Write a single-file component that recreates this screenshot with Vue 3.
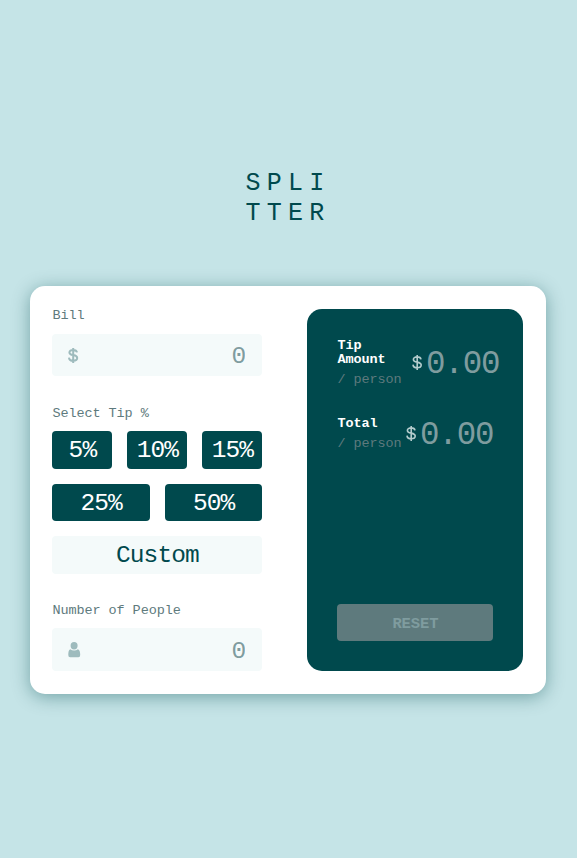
<script setup>
import { ref } from 'vue'

const bill = ref('')
const people = ref('')
const custom = ref('')
const tips = [5, 10, 15, 25, 50]
const results = [
  { name: 'Tip Amount', key: 'tip', value: '0.00' },
  { name: 'Total', key: 'total', value: '0.00' },
]
</script>

<template>
  <main class="page">
    <h1 class="logo"><span>SPLI</span><span>TTER</span></h1>
    <section class="card">
      <form class="entry" @submit.prevent>
        <label class="label" for="bill">Bill</label>
        <div class="field bill">
          <svg width="11" height="17" viewBox="0 0 11 17">
            <path
              d="M9 5.4C8.7 3.6 7.4 2.9 5.2 2.9C2.9 2.9 1.4 3.8 1.4 5.4C1.4 7.2 3 7.7 5.2 8.1C7.6 8.6 9.2 9.3 9.2 11.1C9.2 12.9 7.6 13.8 5.2 13.8C2.7 13.8 1.1 12.7 1 10.6M5.2 1V15.9"
              fill="none"
              stroke="#9ebbbd"
              stroke-width="2"
            />
          </svg>
          <input id="bill" v-model="bill" placeholder="0" />
        </div>
        <span class="label tip-label">Select Tip %</span>
        <div class="tips">
          <button v-for="tip in tips" :key="tip" type="button" :class="{ wide: tip > 15 }">{{ tip }}%</button>
          <input v-model="custom" class="custom" placeholder="Custom" />
        </div>
        <label class="label people-label" for="people">Number of People</label>
        <div class="field">
          <svg width="13" height="16" viewBox="0 0 13 16">
            <path
              d="M9.6 3.8A3.5 3.7 0 1 1 2.6 3.8A3.5 3.7 0 1 1 9.6 3.8ZM2.3 7.2C3.3 8 4.6 8.4 6.1 8.4S8.9 8 9.9 7.2C11.7 7.8 12.2 10.2 12.2 13Q12.2 15.3 10.4 15.3H2.1Q.3 15.3 .3 13C.3 10.2 .6 7.8 2.3 7.2Z"
              fill="#9ebbbd"
            />
          </svg>
          <input id="people" v-model="people" placeholder="0" />
        </div>
      </form>
      <aside class="panel">
        <div v-for="row in results" :key="row.key" class="result" :class="row.key">
          <div class="caption">
            <strong>{{ row.name }}</strong>
            <small>/ person</small>
          </div>
          <svg class="dollar" width="11" height="17" viewBox="0 0 11 17">
            <path
              d="M9 5.4C8.7 3.6 7.4 2.9 5.2 2.9C2.9 2.9 1.4 3.8 1.4 5.4C1.4 7.2 3 7.7 5.2 8.1C7.6 8.6 9.2 9.3 9.2 11.1C9.2 12.9 7.6 13.8 5.2 13.8C2.7 13.8 1.1 12.7 1 10.6M5.2 1V15.9"
              fill="none"
              stroke="#b3cccd"
              stroke-width="1.6"
            />
          </svg>
          <output>{{ row.value }}</output>
        </div>
        <button type="button" class="reset" disabled>RESET</button>
      </aside>
    </section>
  </main>
</template>

<style>
body {
  background: #c5e4e7;
}
</style>

<style scoped>
* {
  box-sizing: border-box;
}
.page,
button,
input {
  font-family: 'Liberation Mono', monospace;
}
.page {
  min-height: 858px;
  padding: 168px 31px 0 30px;
  background: #c5e4e7;
}
.logo {
  display: flex;
  flex-direction: column;
  align-items: center;
  margin: 0 0 58.4px;
  font-size: 25px;
  font-weight: 400;
  line-height: 30px;
  letter-spacing: 6.3px;
  color: #00494d;
}
.logo span {
  padding-top: 1px;
  height: 30px;
}
.card {
  display: flex;
  justify-content: space-between;
  width: 516px;
  height: 407.2px;
  padding: 22.5px 22.6px 22.5px 22.4px;
  border-radius: 15px;
  background: #fff;
  box-shadow: 0 3px 18px rgba(0, 73, 77, 0.42);
}
.entry {
  display: flex;
  flex-direction: column;
  width: 210px;
}
.label {
  height: 25px;
  font-size: 13.5px;
  line-height: 14px;
  letter-spacing: -0.08px;
  color: #5e7a7d;
}
.field {
  display: flex;
  align-items: center;
  width: 210px;
  height: 42.5px;
  padding: 0 15px;
  border-radius: 4px;
  background: #f4fafa;
}
.field svg {
  flex: none;
  margin-left: 0.5px;
}
input {
  min-width: 0;
  border: 0;
  outline: 0;
  padding: 0;
  background: transparent;
  font-size: 24.5px;
  letter-spacing: -0.9px;
}
.field input {
  flex: 1;
  height: 40px;
  padding-top: 3px;
  padding-right: 2px;
  text-align: right;
}
.field input::placeholder {
  color: #7f9c9f;
  opacity: 1;
}
.tip-label {
  margin-top: 30px;
  padding-top: 0.8px;
}
.tips {
  display: grid;
  grid-template-columns: repeat(6, 1fr);
  gap: 15px;
}
.tips button,
.custom {
  height: 37.5px;
  border-radius: 4px;
}
.tips button {
  grid-column: span 2;
  padding: 1px 0 0;
  border: 0;
  background: #00494d;
  color: #fff;
  font-size: 24.5px;
  letter-spacing: -0.9px;
}
.tips .wide {
  grid-column: span 3;
}
.custom {
  grid-column: span 6;
  width: 100%;
  padding-top: 1px;
  background: #f4fafa;
  text-align: center;
}
.custom::placeholder {
  color: #00494d;
  opacity: 1;
}
.people-label {
  margin-top: 29.5px;
  padding-top: 0.8px;
}
.panel {
  display: flex;
  flex-direction: column;
  width: 216px;
  padding: 30px;
  border-radius: 15px;
  background: #00494d;
}
.result {
  display: flex;
  align-items: center;
}
.caption {
  flex: none;
  width: 68.5px;
}
.tip .caption {
  width: 74.5px;
}
.caption strong,
.caption small {
  display: block;
  font-size: 13.5px;
  line-height: 14px;
  letter-spacing: -0.08px;
}
.caption strong {
  width: 60px;
  color: #fff;
}
.caption small {
  margin-top: 6px;
  white-space: nowrap;
  color: #5e7a7d;
}
.total {
  margin-top: 30px;
}
.dollar {
  flex: none;
  margin-right: 3px;
}
output {
  flex: none;
  padding-top: 3px;
  font-size: 32.5px;
  line-height: 31px;
  letter-spacing: -1.1px;
  color: #7f9c9f;
}
.reset {
  height: 37.5px;
  margin-top: auto;
  padding: 3px 0 0;
  border: 0;
  border-radius: 4px;
  background: #5e7a7d;
  color: #7f9c9f;
  font-size: 15.5px;
  font-weight: 700;
  letter-spacing: -0.1px;
}
</style>
